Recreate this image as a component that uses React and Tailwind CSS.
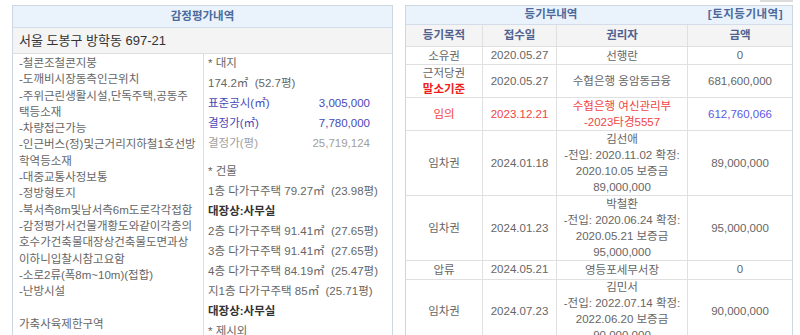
const LEFT_LINES = [
  '-철콘조철콘지붕',
  '-도깨비시장동측인근위치',
  '-주위근린생활시설,단독주택,공동주',
  '택등소재',
  '-차량접근가능',
  '-인근버스(정)및근거리지하철1호선방',
  '학역등소재',
  '-대중교통사정보통',
  '-정방형토지',
  '-북서측8m및남서측6m도로각각접함',
  '-감정평가서건물개황도와같이각층의',
  '호수가건축물대장상건축물도면과상',
  '이하니입찰시참고요함',
  '-소로2류(폭8m~10m)(접합)',
  '-난방시설',
  '',
  '가축사육제한구역',
]

const FLOORS = [
  ['2층 다가구주택 91.41㎡', '(27.65평)'],
  ['3층 다가구주택 91.41㎡', '(27.65평)'],
  ['4층 다가구주택 84.19㎡', '(25.47평)'],
  ['지1층 다가구주택 85㎡', '(25.71평)'],
]

const ROWS = [
  { kind: '소유권', date: '2020.05.27', who: ['선행란'], amt: '0', h: 'h-[21px]' },
  { kind: '근저당권', base: true, date: '2020.05.27', who: ['수협은행 옹암동금융'], amt: '681,600,000', h: 'h-[34px]' },
  { kind: '임의', red: true, date: '2023.12.21', who: ['수협은행 여신관리부', '-2023타경5557'], amt: '612,760,066', h: 'h-[34px]' },
  { kind: '임차권', date: '2024.01.18', who: ['김선애', '-전입: 2020.11.02 확정:', '2020.10.05 보증금', '89,000,000'], amt: '89,000,000', h: 'h-[66px]' },
  { kind: '임차권', date: '2024.01.23', who: ['박철환', '-전입: 2020.06.24 확정:', '2020.05.21 보증금', '95,000,000'], amt: '95,000,000', h: 'h-[66px]' },
  { kind: '압류', date: '2024.05.21', who: ['영등포세무서장'], amt: '0', h: 'h-[22px]' },
  { kind: '임차권', date: '2024.07.23', who: ['김민서', '-전입: 2022.07.14 확정:', '2022.06.20 보증금', '90,000,000'], amt: '90,000,000', h: 'h-[64px]' },
]

function Row({ r }) {
  const txt = r.red ? 'text-[#f04545]' : 'text-[#666]'
  return (
    <div className={`flex border-b border-[#e0e0e0] ${r.h}`}>
      <div className={`w-[77px] shrink-0 flex flex-col items-center justify-center border-r border-[#e0e0e0] leading-[16px] ${txt}`}>
        <span>{r.kind}</span>
        {r.base && <span className="font-bold text-[#ee1c1c]">말소기준</span>}
      </div>
      <div className={`w-[74px] shrink-0 flex items-center justify-center border-r border-[#e0e0e0] ${txt}`}>
        {r.date}
      </div>
      <div className={`w-[131px] shrink-0 flex flex-col items-center justify-center border-r border-[#e0e0e0] leading-[16px] whitespace-nowrap overflow-hidden ${txt}`}>
        {r.who.map((w, i) => <span key={i}>{w}</span>)}
      </div>
      <div className={`flex-1 flex items-center justify-center ${r.red ? 'text-[#5a5ae6]' : 'text-[#666]'}`}>
        {r.amt}
      </div>
    </div>
  )
}

export default function App() {
  return (
    <div className="w-[800px] h-[335px] overflow-hidden bg-white text-[11.5px] font-['Liberation_Sans','Noto_Sans_CJK_KR',sans-serif]">
      {/* top strip */}
      <div className="h-[5px] flex">
        <div className="ml-auto mr-[7px] w-[33px] h-[2px] bg-[#dcdcdc]" />
      </div>

      <div className="flex pl-[12px] gap-[12px]">
        {/* 감정평가내역 */}
        <section className="w-[381px] h-[340px] border border-[#cdd7e3] flex flex-col">
          <div className="h-[22px] bg-[#eaf2fb] border-b border-[#d3dde9] flex items-center justify-center font-bold text-[#4b6a9c]">
            감정평가내역
          </div>
          <div className="h-[26px] bg-[#f4f4f4] border-b border-[#dedede] flex items-center pl-[6px] text-[13px] text-[#333]">
            서울 도봉구 방학동 697-21
          </div>
          <div className="flex flex-1">
            <div className="w-[191px] shrink-0 border-r border-[#dedede] pl-[6px] pt-[1px] text-[#666]">
              {LEFT_LINES.map((l, i) => (
                <div key={i} className="h-[16.3px] leading-[16.3px] whitespace-nowrap overflow-hidden">{l}</div>
              ))}
            </div>
            <div className="flex-1 pl-[4px] text-[#666]">
              <div className="h-[20px] flex items-center">* 대지</div>
              <div className="h-[20px] flex items-center whitespace-pre">174.2㎡  (52.7평)</div>
              <div className="h-[20px] w-[162px] flex items-center justify-between text-[#4848b8]">
                <span>표준공시(㎡)</span><span>3,005,000</span>
              </div>
              <div className="h-[20px] w-[162px] flex items-center justify-between text-[#4848b8]">
                <span>결정가(㎡)</span><span>7,780,000</span>
              </div>
              <div className="h-[20px] w-[162px] flex items-center justify-between text-[#a0a0a0]">
                <span>결정가(평)</span><span>25,719,124</span>
              </div>
              <div className="h-[8px]" />
              <div className="h-[20px] flex items-center">* 건물</div>
              <div className="h-[20px] flex items-center whitespace-pre">1층 다가구주택 79.27㎡  (23.98평)</div>
              <div className="h-[20px] flex items-center font-bold text-[#333]">대장상:사무실</div>
              {FLOORS.map(([a, b], i) => (
                <div key={i} className="h-[20px] flex items-center whitespace-pre">{a}  {b}</div>
              ))}
              <div className="h-[20px] flex items-center font-bold text-[#333]">대장상:사무실</div>
              <div className="h-[20px] flex items-center">* 제시외</div>
            </div>
          </div>
        </section>

        {/* 등기부내역 */}
        <section className="w-[388px] h-[340px] border border-[#cdd7e3] flex flex-col">
          <div className="h-[22px] bg-[#eaf2fb] border-b border-[#d3dde9] flex items-center">
            <span className="w-[290px] text-center font-bold text-[#4b6a9c]">등기부내역</span>
            <span className="ml-auto pr-[9px] font-bold text-[#4b6a9c] tracking-[0.5px]">[토지등기내역]</span>
          </div>
          <div className="h-[26px] flex bg-[#f4f4f4] border-b border-[#e0e0e0] font-bold text-[#4f6290]">
            <div className="w-[77px] flex items-center justify-center border-r border-[#e0e0e0]">등기목적</div>
            <div className="w-[74px] flex items-center justify-center border-r border-[#e0e0e0]">접수일</div>
            <div className="w-[131px] flex items-center justify-center border-r border-[#e0e0e0]">권리자</div>
            <div className="flex-1 flex items-center justify-center">금액</div>
          </div>
          {ROWS.map((r, i) => <Row key={i} r={r} />)}
        </section>
      </div>
    </div>
  )
}
